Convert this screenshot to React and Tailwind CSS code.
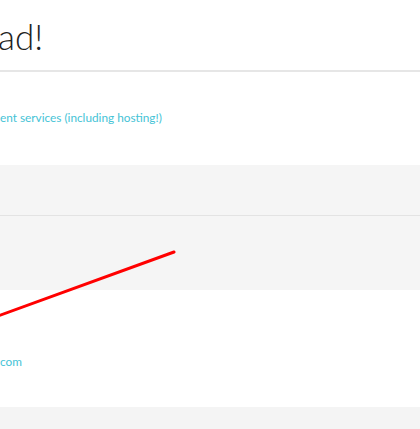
import React from 'react';

export default function App() {
  return (
    <div className="relative w-[420px] h-[429px] overflow-hidden bg-white font-['Lato',sans-serif]">
      {/* Header */}
      <div className="h-[72px] border-b-2 border-[#e6e6e6] flex items-start pt-[14px]">
        <h1 className="-ml-[2px] text-[35px] leading-[44px] font-light text-[#222] whitespace-nowrap">ad!</h1>
      </div>

      {/* Intro */}
      <div className="h-[93px] flex items-start pt-[38px]">
        <a className="text-[11.8px] leading-[16px] text-[#45c3d6] whitespace-nowrap">ent services (including hosting!)</a>
      </div>

      {/* Grey panel */}
      <div className="bg-[#f5f5f5]">
        <div className="h-[51px] border-b border-[#e3e3e3]" />
        <div className="h-[74px]" />
      </div>

      {/* Contact */}
      <div className="h-[117px] flex items-start pt-[64px]">
        <a className="text-[11.8px] leading-[16px] text-[#45c3d6] whitespace-nowrap">com</a>
      </div>

      <div className="h-[22px] bg-[#f4f4f4]" />

      {/* Annotation arrow line */}
      <svg className="absolute left-0 top-0 pointer-events-none" width="420" height="429">
        <line x1="-2" y1="316" x2="174" y2="252" stroke="#ff0000" strokeWidth="3" strokeLinecap="round" />
      </svg>
    </div>
  );
}
